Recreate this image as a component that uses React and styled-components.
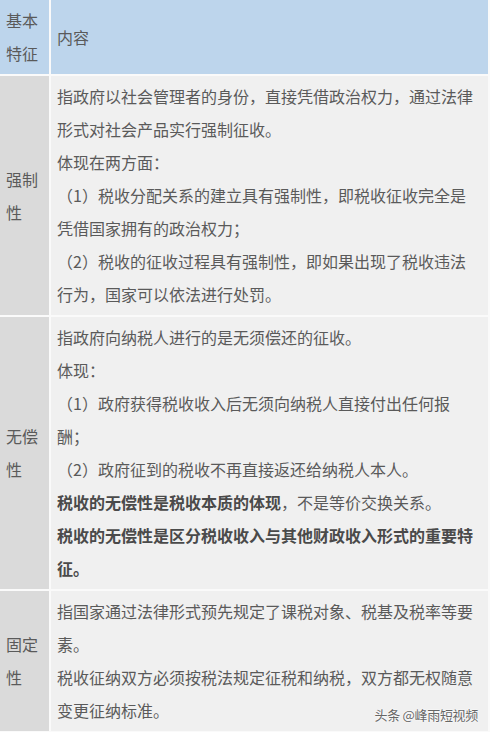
import React from "react";
import styled, { createGlobalStyle } from "styled-components";

const GlobalStyle = createGlobalStyle`
  html, body {
    margin: 0;
    padding: 0;
    background: #fafafa;
  }
  body {
    font-family: "Noto Sans CJK SC", "Noto Sans", sans-serif;
  }
`;

const Page = styled.div`
  position: relative;
  width: 490px;
  height: 732px;
  overflow: hidden;
`;

const Table = styled.div`
  display: grid;
  grid-template-columns: 49px 437px;
  column-gap: 2px;
  row-gap: 2px;
  width: 488px;
  background: #fafafa;
`;

const Cell = styled.div`
  background: ${(p) => (p.$head ? "#bdd5ec" : p.$side ? "#dadada" : "#f0f0f0")};
  color: #5a5a5a;
  font-size: 16px;
  line-height: 33px;
  padding: 4px ${(p) => (p.$side ? "6px" : "11px")} 4px 6px;
  display: flex;
  flex-direction: column;
  justify-content: center;
`;

const Line = styled.p`
  margin: 0;
  font-weight: ${(p) => (p.$bold ? 700 : 400)};
  color: ${(p) => (p.$bold ? "#4a4a4a" : "inherit")};

  b {
    font-weight: 700;
    color: #4a4a4a;
  }
`;

const Watermark = styled.div`
  position: absolute;
  right: 12px;
  bottom: 9px;
  font-size: 13px;
  line-height: 16px;
  color: #666;
  text-shadow: 0 0 2px #fff, 0 0 2px #fff;
  letter-spacing: -0.3px;
`;

const rows = [
  {
    name: "强制性",
    lines: [
      "指政府以社会管理者的身份，直接凭借政治权力，通过法律形式对社会产品实行强制征收。",
      "体现在两方面：",
      "（1）税收分配关系的建立具有强制性，即税收征收完全是凭借国家拥有的政治权力；",
      "（2）税收的征收过程具有强制性，即如果出现了税收违法行为，国家可以依法进行处罚。",
    ],
  },
  {
    name: "无偿性",
    lines: [
      "指政府向纳税人进行的是无须偿还的征收。",
      "体现：",
      "（1）政府获得税收收入后无须向纳税人直接付出任何报酬；",
      "（2）政府征到的税收不再直接返还给纳税人本人。",
      <>
        <b>税收的无偿性是税收本质的体现</b>，不是等价交换关系。
      </>,
      <b>税收的无偿性是区分税收收入与其他财政收入形式的重要特征。</b>,
    ],
  },
  {
    name: "固定性",
    lines: [
      "指国家通过法律形式预先规定了课税对象、税基及税率等要素。",
      "税收征纳双方必须按税法规定征税和纳税，双方都无权随意变更征纳标准。",
    ],
  },
];

export default function App() {
  return (
    <Page>
      <GlobalStyle />
      <Table>
        <Cell $head $side>
          基本特征
        </Cell>
        <Cell $head>内容</Cell>
        {rows.map((row) => (
          <React.Fragment key={row.name}>
            <Cell $side>{row.name}</Cell>
            <Cell>
              {row.lines.map((line, i) => (
                <Line key={i}>{line}</Line>
              ))}
            </Cell>
          </React.Fragment>
        ))}
      </Table>
      <Watermark>头条 @峰雨短视频</Watermark>
    </Page>
  );
}
